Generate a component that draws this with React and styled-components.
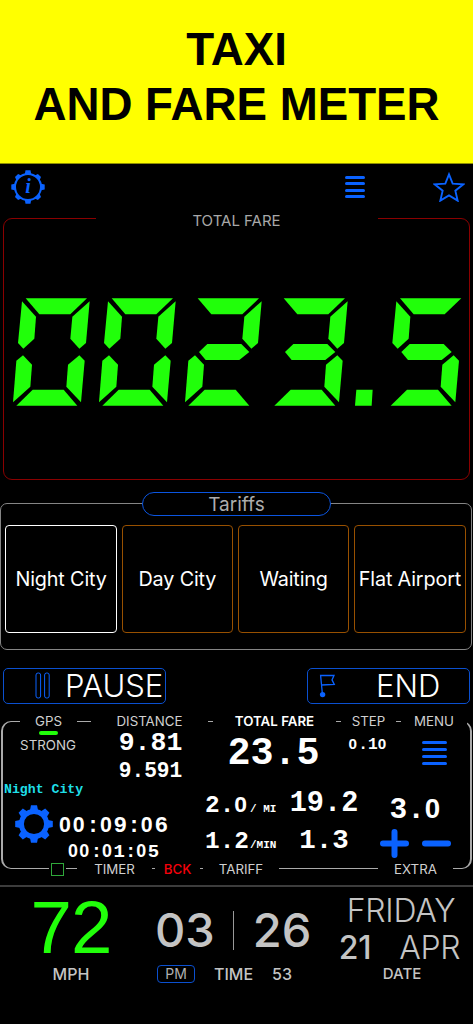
import React from 'react'
import styled, { createGlobalStyle } from 'styled-components'

const blue = '#0a62ff'
const green = '#21ff0a'
const ui = '"Inter", "Liberation Sans", sans-serif'
const mono = '"Liberation Mono", monospace'

// seven segment shapes, 3 units per pixel
const segments = {
    a: '77,39 261,39 211,87 118,87',
    b: '269,48 258,173 238,190 211,160 217,94',
    c: '238,210 254,226 243,351 199,304 204,238',
    d: '49,361 98,313 191,313 232,361',
    e: '69,210 96,238 91,304 39,351 49,226',
    f: '66,48 108,94 103,160 70,190 54,173',
    g: '81,200 106,176 208,176 232,200 202,224 101,224'
}

const fare = [
    { x: 0, on: 'abcdef' },
    { x: 258, on: 'abcdef' },
    { x: 516, on: 'abged' },
    { x: 774, on: 'abgcd' },
    { x: 1123, on: 'afgcd' }
]

const tariffs = ['Night City', 'Day City', 'Waiting', 'Flat Airport']

const SegmentDisplay = () => (
    <svg width="450" height="108.33" viewBox="36 38 1350 325" fill={green}>
        {fare.map(({ x, on }) => (
            <g key={x} transform={`translate(${x} 0)`}>
                {on.split('').map(s => (
                    <polygon key={s} points={segments[s]} />
                ))}
            </g>
        ))}
        <polygon points="1069,313 1118,313 1115,361 1065,361" />
    </svg>
)

const InfoGear = () => (
    <svg width="34" height="34" viewBox="-17 -17 34 34">
        <circle r="13" fill="none" stroke={blue} strokeWidth="2" />
        {[0, 90, 180, 270].map(a => (
            <path
                key={a}
                d="M-3.2 -13 L-2.5 -16.7 H2.5 L3.2 -13Z"
                fill={blue}
                transform={`rotate(${a})`}
            />
        ))}
        {[45, 135, 225, 315].map(a => (
            <path
                key={a}
                d="M-3.4 -13 L-2.2 -16.2 H2.2 L3.4 -13Z"
                fill={blue}
                transform={`rotate(${a})`}
            />
        ))}
        <text
            y="6.3"
            textAnchor="middle"
            fontFamily="Liberation Serif, serif"
            fontStyle="italic"
            fontWeight="bold"
            fontSize="20"
            fill={blue}
        >
            i
        </text>
    </svg>
)

const Gear = () => (
    <svg width="38" height="38" viewBox="-19 -19 38 38">
        <circle r="12.6" fill="none" stroke={blue} strokeWidth="5" />
        {[0, 45, 90, 135, 180, 225, 270, 315].map(a => (
            <path
                key={a}
                d="M-4 -14 L-3 -18.8 H3 L4 -14Z"
                fill={blue}
                transform={`rotate(${a})`}
            />
        ))}
    </svg>
)

const Star = () => (
    <svg width="32" height="30" viewBox="590 36 96 90">
        <polygon
            points="638,43 649,71 681,73 657,92 664,122 638,106 612,122 619,92 595,73 627,71"
            fill="none"
            stroke={blue}
            strokeWidth="5.6"
        />
    </svg>
)

const PauseIcon = () => (
    <svg width="16" height="28" viewBox="0 0 16 28">
        <g fill="none" stroke={blue} strokeWidth="1">
            <rect x="1" y="1" width="4.6" height="25" rx="2" />
            <rect x="9.6" y="1" width="4.6" height="25" rx="2" />
        </g>
    </svg>
)

const Flag = () => (
    <svg width="18" height="26" viewBox="0 0 18 26">
        <path
            d="M3.5 22 L1.6 2.5 H15 L13 6.9 L15.3 11.5 L2.6 12"
            fill="none"
            stroke={blue}
            strokeWidth="1.3"
        />
        <circle cx="3.6" cy="21.6" r="2.7" fill={blue} />
    </svg>
)

// the face's own zero is dotted, so zeros are set in a plain one
const Digits = ({ children, ...rest }) => (
    <Num {...rest}>
        {children.split('').map((c, i) => (c === '0' ? <Zero key={i}>0</Zero> : c))}
    </Num>
)

const MenuBars = ({ w, gap }) => (
    <Bars $w={w} $gap={gap}>
        <i />
        <i />
        <i />
        <i />
    </Bars>
)

const App = () => (
    <Screen>
        <Global />
        <Banner>
            <span>TAXI</span>
            <span>AND FARE METER</span>
        </Banner>
        <Toolbar>
            <InfoGear />
            <ToolbarRight>
                <MenuBars w={20} gap={3.67} />
                <Star />
            </ToolbarRight>
        </Toolbar>
        <FarePanel>
            <FareLegend>TOTAL FARE</FareLegend>
            <SegmentDisplay />
        </FarePanel>
        <TariffPanel>
            <TariffTitle>Tariffs</TariffTitle>
            <TariffGrid>
                {tariffs.map((t, i) => (
                    <Tariff key={t} $active={i === 0}>
                        {t}
                    </Tariff>
                ))}
            </TariffGrid>
        </TariffPanel>
        <Actions>
            <Action $start={31}>
                <PauseIcon />
                <ActionText $left={14}>PAUSE</ActionText>
            </Action>
            <Action $start={11}>
                <Flag />
                <ActionText $left={39}>END</ActionText>
            </Action>
        </Actions>
        <Meter>
            <Legend $start={17}>
                <Label $w={57}>GPS</Label>
                <Label $w={117} $gap={14}>DISTANCE</Label>
                <Label $w={123} $gap={5} $bold>TOTAL FARE</Label>
                <Label $w={55} $gap={5}>STEP</Label>
                <Label $w={66} $gap={5}>MENU</Label>
            </Legend>
            <Upper>
                <Status>
                    <Signal />
                    <Label $w={70}>STRONG</Label>
                </Status>
                <Stack>
                    <Digits $size={26.5} $h={30}>9.81</Digits>
                    <Digits $size={21.2} $h={26}>9.591</Digits>
                </Stack>
                <Stack>
                    <Digits $size={38.4} $h={53}>23.5</Digits>
                </Stack>
                <Stack>
                    <Digits $size={16.2} $h={34}>0.10</Digits>
                </Stack>
                <MenuCell>
                    <MenuBars w={25} gap={4.25} />
                </MenuCell>
            </Upper>
            <Lower>
                <Trip>
                    <TripName>Night City</TripName>
                    <TripBody>
                        <Gear />
                        <Stack>
                            <Digits $size={22.7} $h={28}>00:09:06</Digits>
                            <Digits $size={19} $h={24}>00:01:05</Digits>
                        </Stack>
                    </TripBody>
                </Trip>
                <Rates>
                    <Digits $size={24.4} $h={36}>2.0</Digits>
                    <Unit>/ MI</Unit>
                    <Digits $size={28.6} $h={31}>19.2</Digits>
                    <Digits $size={24.4} $h={35}>1.2</Digits>
                    <Unit>/MIN</Unit>
                    <Digits $size={27.5} $h={33}>1.3</Digits>
                </Rates>
                <Extra>
                    <Digits $size={29.5} $h={36}>3.0</Digits>
                    <Stepper>
                        <svg width="29" height="29" viewBox="0 0 29 29">
                            <path d="M3 14.5H26M14.5 3V26" stroke={blue} strokeWidth="6" strokeLinecap="round" />
                        </svg>
                        <svg width="29" height="29" viewBox="0 0 29 29">
                            <path d="M3 14.5H26" stroke={blue} strokeWidth="6" strokeLinecap="round" />
                        </svg>
                    </Stepper>
                </Extra>
            </Lower>
            <Legend $start={46}>
                <CheckCell>
                    <Check />
                </CheckCell>
                <Label $h={16} $w={75} $gap={11}>TIMER</Label>
                <Label $h={16} $w={45} $gap={3} $alert>BCK</Label>
                <Label $h={16} $w={76} $gap={3}>TARIFF</Label>
                <Label $h={16} $w={75} $gap={99}>EXTRA</Label>
            </Legend>
        </Meter>
        <Footer>
            <Speed>
                <SpeedValue>72</SpeedValue>
                <Caption>MPH</Caption>
            </Speed>
            <Time>
                <Clock>
                    <ClockValue>03</ClockValue>
                    <Divider />
                    <ClockValue>26</ClockValue>
                </Clock>
                <TimeRow>
                    <Period>PM</Period>
                    <Caption>TIME</Caption>
                    <Caption>53</Caption>
                </TimeRow>
            </Time>
            <DateCol>
                <Day>FRIDAY</Day>
                <DateRow>
                    <Day $w={500}>21</Day>
                    <Day>APR</Day>
                </DateRow>
                <DateCaption $size={15}>DATE</DateCaption>
            </DateCol>
        </Footer>
    </Screen>
)

const Global = createGlobalStyle`
    * {
        box-sizing: border-box;
    }
    body {
        margin: 0;
        background: #000;
    }
    svg {
        display: block;
        flex: none;
    }
`

const Screen = styled.div`
    width: 473px;
    height: 1024px;
    overflow: hidden;
    background: #000;
    color: #fff;
    font-family: ${ui};
`

const Banner = styled.div`
    display: flex;
    flex-direction: column;
    align-items: center;
    height: 164px;
    padding-top: 22px;
    background: #ffff00;
    border-bottom: 1px solid #8f8f00;
    color: #000;
    font: bold 45.7px/55px "Liberation Sans", Arial, sans-serif;
`

const Toolbar = styled.div`
    display: flex;
    align-items: center;
    justify-content: space-between;
    height: 46px;
    padding: 0 8px 0 11px;
`

const ToolbarRight = styled.div`
    display: flex;
    align-items: center;
    gap: 68px;
`

const Bars = styled.div`
    display: flex;
    flex-direction: column;
    gap: ${p => p.$gap}px;
    width: ${p => p.$w}px;
    i {
        height: 3px;
        border-radius: 1.5px;
        background: ${blue};
    }
`

const FarePanel = styled.div`
    display: flex;
    flex-direction: column;
    align-items: center;
    gap: 68px;
    width: 467px;
    height: 262px;
    margin: 8px 0 0 3px;
    border: 1px solid #8a0000;
    border-radius: 9px;
`

const FareLegend = styled.div`
    width: 282px;
    height: 19px;
    margin-top: -8px;
    background: #000;
    color: #a8a8a8;
    font-size: 15px;
    line-height: 19px;
    text-align: center;
`

const TariffPanel = styled.div`
    display: flex;
    flex-direction: column;
    align-items: center;
    width: 472px;
    height: 147px;
    margin-top: 23px;
    border: 1px solid #858585;
    border-radius: 7px;
`

const TariffTitle = styled.div`
    width: 189px;
    height: 24px;
    margin: -12px 0 0 1px;
    border: 1px solid #0b55e0;
    border-radius: 12px;
    background: #000;
    color: #adadad;
    font-size: 19px;
    line-height: 23px;
    text-align: center;
`

const TariffGrid = styled.div`
    display: grid;
    grid-template-columns: repeat(4, 111.6px);
    column-gap: 4.7px;
    margin: 9px 0 0 -1px;
`

const Tariff = styled.div`
    height: 108px;
    border: 1px solid ${p => (p.$active ? '#fff' : '#985000')};
    border-radius: 4px;
    font-size: 19.8px;
    line-height: 106px;
    letter-spacing: -0.15px;
    text-align: center;
    white-space: nowrap;
`

const Actions = styled.div`
    display: flex;
    justify-content: space-between;
    margin-top: 18px;
    padding: 0 3px;
`

const Action = styled.div`
    display: flex;
    align-items: center;
    width: 163px;
    height: 36px;
    padding-left: ${p => p.$start}px;
    border: 1px solid #0b50d0;
    border-radius: 5px;
`

const ActionText = styled.div`
    margin-left: ${p => p.$left}px;
    font-size: 31px;
    font-weight: 300;
    line-height: 34px;
    white-space: nowrap;
`

const Meter = styled.div`
    width: 471px;
    height: 148px;
    margin: 17px 0 0 1px;
    border: solid #aaa;
    border-width: 1px 2px;
    border-radius: 10px;
`

const Legend = styled.div`
    display: flex;
    height: 14px;
    margin-top: -8px;
    padding-left: ${p => p.$start}px;
    div + & {
        margin-top: 0;
    }
`

const Label = styled.div`
    flex: none;
    width: ${p => p.$w}px;
    margin-left: ${p => p.$gap || 0}px;
    background: #000;
    color: ${p => (p.$alert ? '#f5000a' : p.$bold ? '#fff' : '#d0d0d0')};
    font-size: 13.3px;
    font-weight: ${p => (p.$bold ? 600 : p.$alert ? 500 : 400)};
    line-height: ${p => p.$h || 14}px;
    text-align: center;
    white-space: nowrap;
`

const Upper = styled.div`
    display: grid;
    grid-template-columns: 90px 115px 131px 58px 74px;
    height: 54px;
`

const Stack = styled.div`
    display: flex;
    flex-direction: column;
    align-items: center;
`

const Status = styled(p => <Stack {...p} />)`
    gap: 3px;
    padding-top: 3px;
`

const Signal = styled.div`
    width: 19px;
    height: 4px;
    border-radius: 2px;
    background: ${green};
`

const MenuCell = styled.div`
    display: flex;
    justify-content: center;
    padding-top: 12.5px;
`

const Num = styled.div`
    font-family: ${mono};
    font-size: ${p => p.$size}px;
    font-weight: bold;
    line-height: ${p => p.$h}px;
    height: ${p => p.$h}px;
    white-space: nowrap;
`

const Zero = styled.span`
    font-family: "Liberation Sans", sans-serif;
    font-size: 0.94em;
    line-height: 1px;
    letter-spacing: 0.082em;
`

const Lower = styled.div`
    display: flex;
    height: 79px;
`

const Trip = styled.div`
    width: 202px;
`

const TripName = styled.div`
    height: 14px;
    padding-left: 1px;
    color: #1fdfe8;
    font: bold 13.2px/16px ${mono};
`

const TripBody = styled.div`
    display: flex;
    align-items: flex-start;
    gap: 6px;
    padding-left: 12px;
    svg {
        margin-top: 9px;
    }
    ${Stack} {
        padding-top: 16px;
    }
`

const Rates = styled.div`
    display: grid;
    grid-template-columns: 44px 35px 80px;
    grid-template-rows: 36px 35px;
    width: 175px;
    padding-top: 6px;
    ${Num}:nth-child(3n) {
        text-align: center;
    }
`

const Unit = styled.div`
    padding-left: 1px;
    font: bold 11px/42px ${mono};
    white-space: nowrap;
`

const Extra = styled.div`
    display: flex;
    flex-direction: column;
    align-items: center;
    width: 72px;
    padding-top: 10px;
`

const Stepper = styled.div`
    display: flex;
    gap: 13px;
    margin: 1px 1px 0 0;
`

const CheckCell = styled.div`
    display: flex;
    justify-content: center;
    width: 17px;
    background: #000;
`

const Check = styled.div`
    flex: none;
    width: 13px;
    height: 13px;
    margin-top: 2px;
    border: 1px solid #2fa83a;
`

const Footer = styled.div`
    display: flex;
    height: 138px;
    margin-top: 16px;
    border-top: 2px solid #3c3c3c;
    > div {
        flex: none;
    }
`

const Speed = styled.div`
    display: flex;
    flex-direction: column;
    align-items: center;
    width: 142px;
`

const SpeedValue = styled.div`
    height: 78px;
    color: ${green};
    font: 74.5px/81px "Liberation Sans", sans-serif;
    letter-spacing: -1px;
`

const Caption = styled.div`
    color: #c4c4c4;
    font-size: ${p => p.$size || 16}px;
    font-weight: 500;
    line-height: 18px;
`

const DateCaption = styled(Caption)`
    margin-left: 2px;
    line-height: 16px;
`

const Time = styled.div`
    width: 183px;
    padding: 22px 0 0 14px;
`

const Clock = styled.div`
    display: flex;
    align-items: center;
    gap: 18.5px;
    height: 42px;
    margin-left: -1px;
`

const ClockValue = styled.div`
    color: #c4c4c4;
    font-size: 47px;
    font-weight: 500;
    line-height: 38px;
`

const Divider = styled.div`
    width: 1px;
    height: 39px;
    background: #999;
`

const TimeRow = styled.div`
    display: flex;
    align-items: center;
    gap: 19px;
    margin: 14px 0 0 1px;
`

const Period = styled.div`
    width: 38px;
    height: 18px;
    border: 1px solid #0b50d0;
    border-radius: 4px;
    color: #b0b0b0;
    font-size: 14px;
    line-height: 16px;
    text-align: center;
`

const DateCol = styled.div`
    display: flex;
    flex-direction: column;
    align-items: center;
    width: 152px;
    padding-top: 5px;
`

const Day = styled.div`
    color: #c4c4c4;
    font-size: 32px;
    font-weight: ${p => p.$w || 300};
    line-height: 37px;
    letter-spacing: -0.3px;
`

const DateRow = styled.div`
    display: flex;
    gap: 28px;
    margin-right: 3px;
`

export default App
